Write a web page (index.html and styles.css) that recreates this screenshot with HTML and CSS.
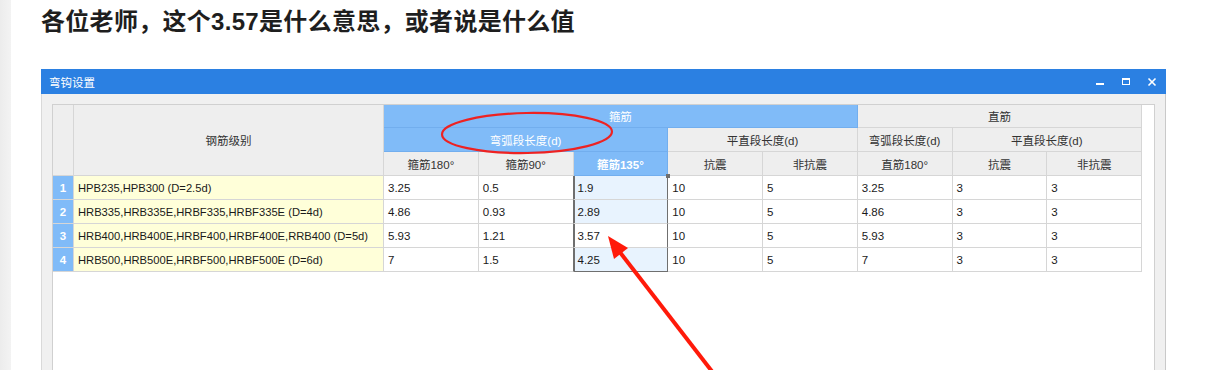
FILE: index.html
```html
<!DOCTYPE html>
<html lang="zh-CN">
<head>
  <meta charset="UTF-8" />
  <title>弯钩设置</title>
  <link rel="stylesheet" href="styles.css">
</head>
<body>
  <div class="page">
    <div class="side-strip"></div>

    <div class="main">
      <h1 class="question">各位老师，这个3.57是什么意思，或者说是什么值</h1>

      <div class="dialog">
        <div class="dialog-bar">
          <span class="dialog-title">弯钩设置</span>
          <div class="win-controls">
            <svg width="10" height="10" viewBox="0 0 10 10">
              <rect x="1" y="6" width="8" height="2" fill="#fff"></rect>
            </svg>
            <svg width="10" height="10" viewBox="0 0 10 10">
              <rect x="1.5" y="1.5" width="7" height="6" fill="none" stroke="#fff" stroke-width="1"></rect>
              <rect x="1" y="1" width="8" height="2" fill="#fff"></rect>
            </svg>
            <svg width="10" height="10" viewBox="0 0 10 10">
              <line x1="1.5" y1="1.5" x2="8.5" y2="8.5" stroke="#fff" stroke-width="1.6"></line>
              <line x1="8.5" y1="1.5" x2="1.5" y2="8.5" stroke="#fff" stroke-width="1.6"></line>
            </svg>
          </div>
        </div>

        <div class="dialog-body">
          <div class="grid-box">
            <table class="grid">
              <colgroup>
                <col class="c-num">
                <col class="c-name">
                <col class="c-val"><col class="c-val"><col class="c-val"><col class="c-val">
                <col class="c-val"><col class="c-val"><col class="c-val"><col class="c-val">
              </colgroup>
              <thead>
                <tr class="h1">
                  <th rowspan="3"></th>
                  <th rowspan="3">钢筋级别</th>
                  <th colspan="5" class="hl">箍筋</th>
                  <th colspan="3">直筋</th>
                </tr>
                <tr class="h2">
                  <th colspan="3" class="hl">弯弧段长度(d)</th>
                  <th colspan="2">平直段长度(d)</th>
                  <th>弯弧段长度(d)</th>
                  <th colspan="2">平直段长度(d)</th>
                </tr>
                <tr class="h3">
                  <th>箍筋180°</th>
                  <th>箍筋90°</th>
                  <th class="hl strong">箍筋135°</th>
                  <th>抗震</th>
                  <th>非抗震</th>
                  <th>直筋180°</th>
                  <th>抗震</th>
                  <th>非抗震</th>
                </tr>
              </thead>
              <tbody>
                <tr>
                  <td class="num">1</td>
                  <td class="name">HPB235,HPB300 (D=2.5d)</td>
                  <td>3.25</td><td class="pre">0.5</td><td class="pick first">1.9</td>
                  <td>10</td><td>5</td><td>3.25</td><td>3</td><td>3</td>
                </tr>
                <tr>
                  <td class="num">2</td>
                  <td class="name">HRB335,HRB335E,HRBF335,HRBF335E (D=4d)</td>
                  <td>4.86</td><td class="pre">0.93</td><td class="pick">2.89</td>
                  <td>10</td><td>5</td><td>4.86</td><td>3</td><td>3</td>
                </tr>
                <tr>
                  <td class="num">3</td>
                  <td class="name">HRB400,HRB400E,HRBF400,HRBF400E,RRB400 (D=5d)</td>
                  <td>5.93</td><td class="pre">1.21</td><td class="pick current">3.57</td>
                  <td>10</td><td>5</td><td>5.93</td><td>3</td><td>3</td>
                </tr>
                <tr>
                  <td class="num">4</td>
                  <td class="name">HRB500,HRB500E,HRBF500,HRBF500E (D=6d)</td>
                  <td>7</td><td class="pre">1.5</td><td class="pick last">4.25</td>
                  <td>10</td><td>5</td><td>7</td><td>3</td><td>3</td>
                </tr>
              </tbody>
            </table>
          </div>
        </div>
      </div>
    </div>
  </div>

  <!-- red hand-drawn marks over the screenshot -->
  <svg class="marks" width="1216" height="370" viewBox="0 0 1216 370">
    <ellipse cx="527" cy="133" rx="85" ry="20" fill="none" stroke="#ee2222" stroke-width="2.2" transform="rotate(-1 527 133)"></ellipse>
    <line x1="619" y1="251" x2="714" y2="374" stroke="#ff1a0a" stroke-width="4"></line>
    <polygon points="608,236 628,248 614,259" fill="#ff1a0a"></polygon>
  </svg>
</body>
</html>
```

FILE: styles.css
```css
* {
  margin: 0;
  padding: 0;
  box-sizing: border-box;
}

body {
  width: 1216px;
  height: 370px;
  overflow: hidden;
  background: #fff;
  font-family: "Liberation Sans", "Noto Sans CJK SC", sans-serif;
  color: #222;
  position: relative;
}

.page {
  display: flex;
  height: 370px;
}

.side-strip {
  width: 11px;
  background: linear-gradient(to right, #ececec, #f3f3f3);
}

.main {
  flex: 1;
  display: flex;
  flex-direction: column;
  padding-left: 30px;
}

/* Question heading */
.question {
  font-size: 24px;
  font-weight: 700;
  line-height: 32px;
  padding-top: 6px;
  color: #1e1e1e;
  letter-spacing: 0.3px;
}

/* Dialog window */
.dialog {
  width: 1125px;
  margin-top: 31px;
  flex: 1;
  display: flex;
  flex-direction: column;
}

.dialog-bar {
  height: 25px;
  background: #2b80e2;
  display: flex;
  align-items: center;
  justify-content: space-between;
  padding: 0 9px 0 8px;
}

.dialog-title {
  color: #fff;
  font-size: 11.5px;
  font-family: "Noto Sans CJK SC", sans-serif;
}

.win-controls {
  display: flex;
  gap: 16px;
}

.dialog-body {
  flex: 1;
  display: flex;
  background: #f0f0f0;
  border-left: 1px solid #d9d9d9;
  border-right: 1px solid #c9c9c9;
  padding: 10px 10px 0 10px;
}

.grid-box {
  flex: 1;
  background: #fff;
  border: 1px solid #d0d0d0;
  border-bottom: none;
}

/* Grid */
.grid {
  border-collapse: separate;
  border-spacing: 0;
  table-layout: fixed;
  width: 1089px;
  font-size: 11.5px;
}

.c-num { width: 21px; }
.c-name { width: 310px; }
.c-val { width: 94.75px; }

.grid th,
.grid td {
  border-right: 1px solid #d6d6d6;
  border-bottom: 1px solid #d6d6d6;
  white-space: nowrap;
  overflow: hidden;
}

.grid th {
  background: #eeeeee;
  color: #333;
  font-weight: 400;
  text-align: center;
}

.grid th.hl {
  background: #80bbf8;
  color: #fff;
  border-color: #72aeee;
}

.grid th.strong {
  font-weight: 700;
}

.h1 { height: 23px; }
.h2 { height: 24px; }
.h3 { height: 24px; }

.grid tbody tr { height: 24px; }

.grid td {
  padding-left: 4px;
  color: #1a1a1a;
  background: #fff;
}

.grid td.name {
  background: #ffffd9;
  font-size: 11.2px;
}

.grid td.num {
  background: #80bbf8;
  color: #fff;
  font-weight: 700;
  text-align: center;
  padding-left: 0;
}

/* selected column */
.grid td.pre {
  border-right-color: #6f6f6f;
}

.grid td.pick {
  background: #e8f3fe;
  border-right-color: #6f6f6f;
  box-shadow: inset 1px 0 0 #6f6f6f;
}

.grid td.pick.current {
  background: #fff;
}

.grid td.pick.last {
  border-bottom-color: #6f6f6f;
}

.grid td.pick.first {
  position: relative;
  overflow: visible;
}

.grid td.pick.first::after {
  content: "";
  position: absolute;
  right: -3px;
  top: -2px;
  width: 4px;
  height: 4px;
  background: #6f6f6f;
}

/* annotation overlay */
.marks {
  position: absolute;
  left: 0;
  top: 0;
  pointer-events: none;
}
```
